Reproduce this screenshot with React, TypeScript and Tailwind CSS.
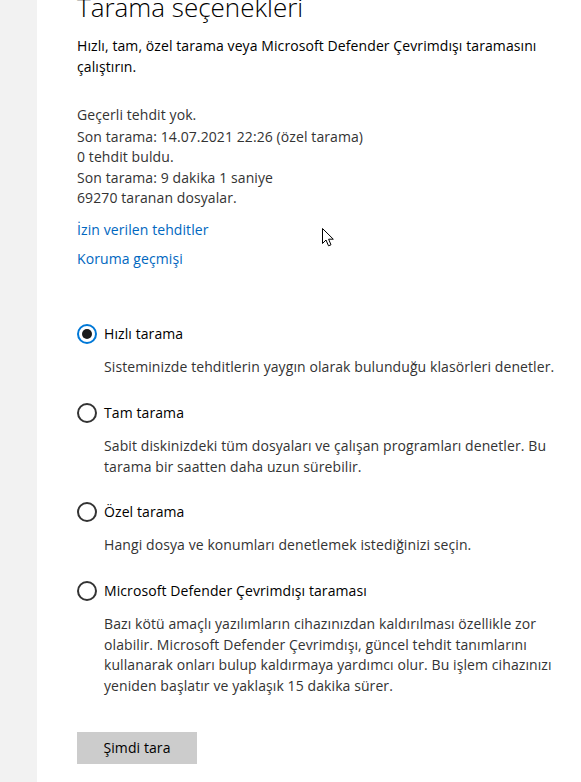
import React from "react";

function Radio({ checked }: { checked?: boolean }) {
  return checked ? (
    <span className="flex h-[20px] w-[20px] shrink-0 items-center justify-center rounded-full border-2 border-[#0078d7] bg-white">
      <span className="h-[10px] w-[10px] rounded-full bg-[#1a1a1a]" />
    </span>
  ) : (
    <span className="h-[20px] w-[20px] shrink-0 rounded-full border-2 border-[#333333] bg-white" />
  );
}

function Option({
  label,
  lines,
  checked,
  first,
}: {
  label: string;
  lines: string[];
  checked?: boolean;
  first?: boolean;
}) {
  return (
    <div className={first ? "mt-[55px]" : "mt-[25px]"}>
      <div className="flex h-[20px] items-center gap-[7px]">
        <Radio checked={checked} />
        <span className="whitespace-nowrap text-[#000] leading-[20px]">{label}</span>
      </div>
      <div className="mt-[13px] pl-[27px] text-[#333] leading-[20.7px]">
        {lines.map((l) => (
          <div key={l} className="whitespace-nowrap">
            {l}
          </div>
        ))}
      </div>
    </div>
  );
}

export default function App() {
  return (
    <div
      className="relative flex h-[782px] w-[581px] overflow-hidden bg-white text-[14px] tracking-[0.09px]"
      style={{ fontFamily: '"Open Sans", "Noto Sans", sans-serif' }}
    >
      <div className="w-[37px] shrink-0 bg-[#f2f2f2]" />
      <div className="flex flex-col pl-[40px]">
        <h1 className="mt-[-11px] whitespace-nowrap text-[26px] font-light leading-[36px] tracking-[0px] text-[#000]">
          Tarama seçenekleri
        </h1>
        <div className="mt-[10px] leading-[21px] text-[#000]">
          <div className="whitespace-nowrap">
            Hızlı, tam, özel tarama veya Microsoft Defender Çevrimdışı taramasını
          </div>
          <div className="whitespace-nowrap">çalıştırın.</div>
        </div>
        <div className="mt-[28px] leading-[20px] text-[#333]">Geçerli tehdit yok.</div>
        <div className="mt-[2px] leading-[20.3px] text-[#333]">
          <div className="whitespace-nowrap">Son tarama: 14.07.2021 22:26 (özel tarama)</div>
          <div>0 tehdit buldu.</div>
          <div>Son tarama: 9 dakika 1 saniye</div>
          <div>69270 taranan dosyalar.</div>
        </div>
        <a className="mt-[12px] leading-[20px] text-[#0067c0]" href="#">
          İzin verilen tehditler
        </a>
        <a className="mt-[9px] leading-[20px] text-[#0067c0]" href="#">
          Koruma geçmişi
        </a>

        <Option
          first
          checked
          label="Hızlı tarama"
          lines={["Sisteminizde tehditlerin yaygın olarak bulunduğu klasörleri denetler."]}
        />
        <Option
          label="Tam tarama"
          lines={[
            "Sabit diskinizdeki tüm dosyaları ve çalışan programları denetler. Bu",
            "tarama bir saatten daha uzun sürebilir.",
          ]}
        />
        <Option label="Özel tarama" lines={["Hangi dosya ve konumları denetlemek istediğinizi seçin."]} />
        <Option
          label="Microsoft Defender Çevrimdışı taraması"
          lines={[
            "Bazı kötü amaçlı yazılımların cihazınızdan kaldırılması özellikle zor",
            "olabilir. Microsoft Defender Çevrimdışı, güncel tehdit tanımlarını",
            "kullanarak onları bulup kaldırmaya yardımcı olur. Bu işlem cihazınızı",
            "yeniden başlatır ve yaklaşık 15 dakika sürer.",
          ]}
        />

        <button className="mt-[35px] h-[32px] w-[120px] bg-[#cccccc] text-[#000] leading-[20px]">
          Şimdi tara
        </button>
      </div>

      <svg
        className="absolute left-[322px] top-[228px]"
        width="13"
        height="20"
        viewBox="0 0 13 20"
      >
        <path
          d="M0.5 0.5 L0.5 15.5 L4 12 L6.5 17.8 L9 16.8 L6.6 11.2 L11.3 11.2 Z"
          fill="#fff"
          stroke="#000"
          strokeWidth="1"
          strokeLinejoin="miter"
        />
      </svg>
    </div>
  );
}
